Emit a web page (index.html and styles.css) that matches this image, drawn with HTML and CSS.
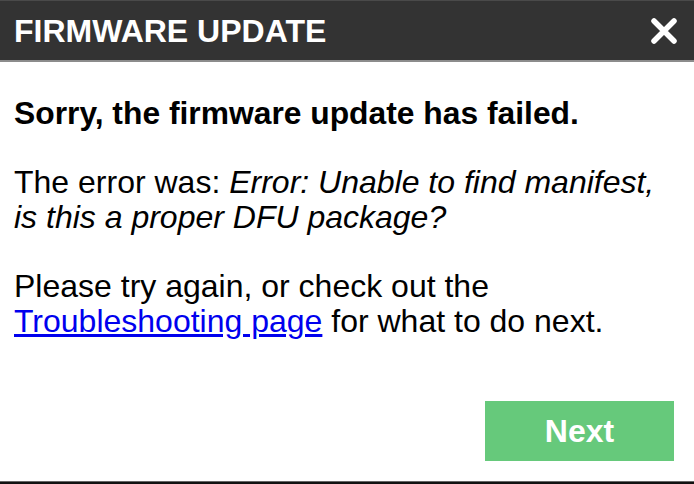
FILE: index.html
```html
<!DOCTYPE html>
<html lang="en">
<head>
    <meta charset="UTF-8">
    <meta name="viewport" content="width=device-width, initial-scale=1.0">
    <title>Firmware Update</title>
    <link rel="stylesheet" href="styles.css">
</head>
<body>
    <div class="dialog">
        <div class="dialog-header">
            <h1>FIRMWARE UPDATE</h1>
            <button class="close" aria-label="Close">
                <svg width="28" height="26" viewBox="0 0 28 26">
                    <path d="M4 3 L24 23 M24 3 L4 23" stroke="#fff" stroke-width="5.5" stroke-linecap="round"/>
                </svg>
            </button>
        </div>
        <div class="dialog-body">
            <p class="lead">Sorry, the firmware update has failed.</p>
            <p>The error was: <em>Error: Unable to find manifest,</em><br><em>is this a proper DFU package?</em></p>
            <p>Please try again, or check out the<br><a href="#">Troubleshooting page</a> for what to do next.</p>
        </div>
        <div class="dialog-footer">
            <button class="next">Next</button>
        </div>
    </div>
    <div class="taskbar"></div>
</body>
</html>
```

FILE: styles.css
```css
html, body {
    margin: 0;
    padding: 0;
    height: 100%;
}
body {
    font-family: "Liberation Sans", Arial, sans-serif;
    background-color: #fff;
    color: #000;
    display: flex;
    flex-direction: column;
}
.dialog {
    flex: 1;
    display: flex;
    flex-direction: column;
}
.dialog-header {
    height: 59px;
    background-color: #333;
    border-top: 1px solid #4a4a4a;
    border-bottom: 2px solid #8c8c8c;
    display: flex;
    align-items: center;
    justify-content: space-between;
    padding: 0 14px 0 14px;
}
.dialog-header h1 {
    margin: 0;
    font-size: 32px;
    font-weight: bold;
    color: #fff;
    line-height: 1;
}
.close {
    background: none;
    border: none;
    padding: 0;
    margin-right: 2px;
    display: flex;
}
.dialog-body {
    flex: 1;
    padding: 34px 14px 0 14px;
}
.dialog-body p {
    margin: 0 0 34px 0;
    font-size: 32px;
    line-height: 35px;
}
.dialog-body p.lead {
    font-weight: bold;
    font-size: 31.8px;
}
.dialog-body a {
    color: #0000ee;
}
.dialog-footer {
    display: flex;
    justify-content: flex-end;
    padding: 0 20px 20px 0;
}
.next {
    width: 189px;
    height: 60px;
    background-color: #66c97b;
    border: none;
    color: #fff;
    font-family: "Liberation Sans", Arial, sans-serif;
    font-size: 32px;
    font-weight: bold;
}
.taskbar {
    height: 2px;
    background-color: #111;
    border-top: 1px solid #666;
}
```
